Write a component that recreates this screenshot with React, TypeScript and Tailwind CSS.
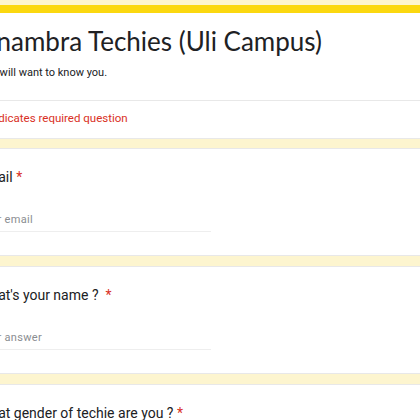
import React from "react";

function Question({ label, placeholder, gap }: { label: string; placeholder: string; gap: string }) {
  return (
    <div className="bg-white border-y border-[#e8e8e8] pt-[16px] pb-[23px] pl-[24px]">
      <div className="text-[14px] text-[#202124] leading-[24px]" style={{ fontFamily: "Roboto, sans-serif" }}>
        {label}
        {gap}
        <span className="text-[#d93025]">*</span>
      </div>
      <div className="mt-[20px] w-[233px] border-b border-[#eeeeee] pb-[3px] leading-[16px]">
        <span className="text-[11px] text-[#8a8d91] tracking-[0.3px]" style={{ fontFamily: "Roboto, sans-serif" }}>
          {placeholder}
        </span>
      </div>
    </div>
  );
}

export default function App() {
  return (
    <div className="w-[420px] h-[420px] overflow-hidden bg-[#fdf5cf]">
      <div className="ml-[-46px] w-[640px] pt-[5px] flex flex-col">
        <div className="h-[8px] bg-[#fbd810]" />
        <div className="bg-white border-b border-[#e8e8e8] pl-[24px] pt-[10px] pb-[18px]">
          <div className="text-[26px] text-[#202124] leading-[36px] ml-[1px]" style={{ fontFamily: "Lato, sans-serif" }}>
            Anambra Techies (Uli Campus)
          </div>
          <div className="mt-[5px] text-[11px] text-[#202124] leading-[18px] ml-[-2px]" style={{ fontFamily: "Roboto, sans-serif" }}>
            We&nbsp;&nbsp; will want to know you.
          </div>
        </div>
        <div className="bg-white border-b border-[#e8e8e8] pl-[24px] pt-[8px] pb-[11px]">
          <div className="text-[11.5px] text-[#d93025] leading-[18px] ml-[3px]" style={{ fontFamily: "Roboto, sans-serif" }}>
            * Indicates required question
          </div>
        </div>
        <div className="h-[9px]" />
        <Question label="Email" placeholder="Your email" gap=" " />
        <div className="h-[10px]" />
        <Question label="What's your name ?" placeholder="Your answer" gap={"\u00a0 "} />
        <div className="h-[10px]" />
        <Question label="What gender of techie are you ?" placeholder="Your answer" gap=" " />
      </div>
    </div>
  );
}
